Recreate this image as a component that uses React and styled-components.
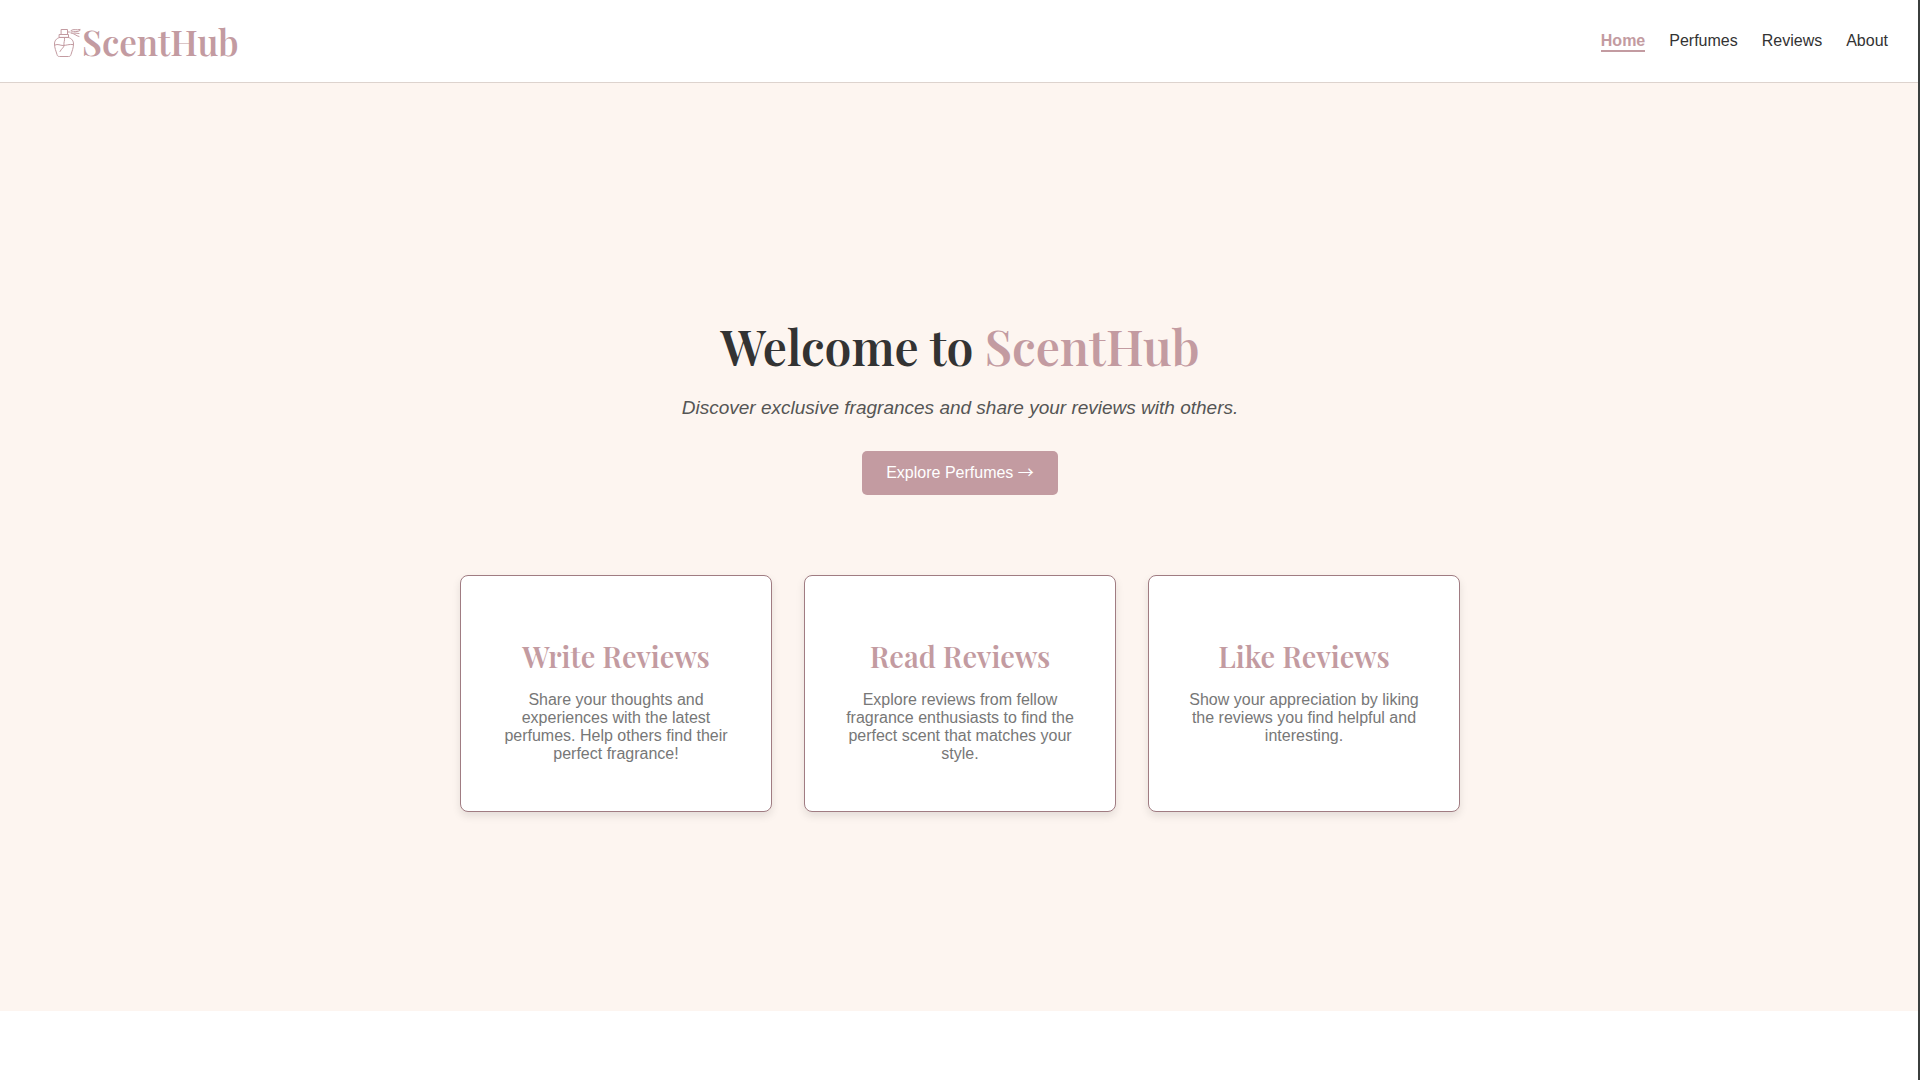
import React from "react";
import styled, { createGlobalStyle } from "styled-components";

const rose = "#c39ba1";
const sans = '"Liberation Sans", Arial, sans-serif';
const serif = '"Playfair Display", "Liberation Serif", serif';

const GlobalStyle = createGlobalStyle`
  * { box-sizing: border-box; }
  body { margin: 0; background: #fff; font-family: ${sans}; font-size: 16px; line-height: 18px; }
`;

const Header = styled.header`
  display: flex;
  justify-content: space-between;
  align-items: center;
  padding: 17px 32px 15px 52px;
  border-bottom: 1px solid #ddd3ce;
`;

const Brand = styled.a`
  display: flex;
  align-items: center;
  color: ${rose};
  font: 600 35px/50px ${serif};
  text-decoration: none;
`;

const BrandIcon = styled.svg`
  width: 30px;
  height: 32px;
`;

const Nav = styled.nav`
  display: flex;
  gap: 24px;
`;

const NavLink = styled.a`
  border-bottom: 2px solid ${(p) => (p.$active ? rose : "transparent")};
  color: ${(p) => (p.$active ? rose : "#333")};
  font-weight: ${(p) => (p.$active ? "bold" : "normal")};
  text-decoration: none;
`;

const Hero = styled.main`
  display: flex;
  flex-direction: column;
  align-items: center;
  justify-content: center;
  min-height: calc(100vh - 152px);
  padding: 32px;
  background: #fdf5f0;
  text-align: center;
`;

const Title = styled.h1`
  margin: 32px 0 16px;
  color: #333;
  font: 600 48px/64px ${serif};
`;

const Accent = styled.span`
  color: ${rose};
`;

const Subtitle = styled.p`
  margin: 0 0 29px;
  color: #555;
  font-size: 19px;
  font-style: italic;
  line-height: 28px;
`;

const Explore = styled.button`
  padding: 13px 24px;
  border: 0;
  border-radius: 5px;
  background: ${rose};
  color: #fff;
  font: 16px/18px ${sans};
  cursor: pointer;
`;

const Arrow = styled.span`
  font-family: "Noto Sans CJK JP", sans-serif;
  line-height: 0;
`;

const Cards = styled.section`
  display: grid;
  grid-template-columns: repeat(3, 1fr);
  gap: 32px;
  width: 100%;
  max-width: 1000px;
  margin-top: 80px;
`;

const Card = styled.article`
  padding: 60px 40px 48px;
  border: 1px solid #a07c82;
  border-radius: 8px;
  background: #fff;
  box-shadow: 0 4px 8px rgba(0, 0, 0, 0.1);
`;

const CardTitle = styled.h2`
  margin: 0 0 15px;
  color: ${rose};
  font: 600 29px/40px ${serif};
`;

const CardText = styled.p`
  margin: 0;
  color: #777;
`;

const WindowEdge = styled.div`
  position: fixed;
  inset: 0 0 0 auto;
  width: 2px;
  background: #3b3f3e;
`;

const links = ["Home", "Perfumes", "Reviews", "About"];

const features = [
  {
    title: "Write Reviews",
    text: "Share your thoughts and experiences with the latest perfumes. Help others find their perfect fragrance!",
  },
  {
    title: "Read Reviews",
    text: "Explore reviews from fellow fragrance enthusiasts to find the perfect scent that matches your style.",
  },
  {
    title: "Like Reviews",
    text: "Show your appreciation by liking the reviews you find helpful and interesting.",
  },
];

function PerfumeIcon() {
  return (
    <BrandIcon viewBox="0 0 30 32" fill="none" stroke={rose} strokeWidth="1" strokeLinecap="round" strokeLinejoin="round" aria-hidden="true">
      <path d="M9.500 3.500h6v5h-6zM15.500 6h2M7.500 8.500h9v3h-9z" />
      <path d="M7.500 11.500c-3.500 1-5 3.500-5 6.500 0 4 1.500 7 2.500 10.500.4 1.500 1 2 2.500 2h9c1.500 0 2.100-.5 2.500-2 1-3.500 2.500-6.500 2.500-10.500 0-3-1.500-5.500-5-6.500z" />
      <path d="M3 19c3-1.500 5 .5 8 .5s6-1.500 10-1M12.500 12c.5 3-1 4-.5 7.500 0 2-2.500 3-4 6" />
      <path d="M19 4.500c3-2 5 0 9-1M19 6c4-1 6 .5 9-1.500M19 7c3 0 5 3 8 3.500M22 7l5 .5" />
    </BrandIcon>
  );
}

export default function App() {
  return (
    <>
      <GlobalStyle />
      <Header>
        <Brand href="#home">
          <PerfumeIcon />
          ScentHub
        </Brand>
        <Nav>
          {links.map((name, i) => (
            <NavLink key={name} href={`#${name.toLowerCase()}`} $active={i === 0}>
              {name}
            </NavLink>
          ))}
        </Nav>
      </Header>
      <Hero>
        <Title>
          Welcome to <Accent>ScentHub</Accent>
        </Title>
        <Subtitle>Discover exclusive fragrances and share your reviews with others.</Subtitle>
        <Explore type="button">
          Explore Perfumes <Arrow>→</Arrow>
        </Explore>
        <Cards>
          {features.map((f) => (
            <Card key={f.title}>
              <CardTitle>{f.title}</CardTitle>
              <CardText>{f.text}</CardText>
            </Card>
          ))}
        </Cards>
      </Hero>
      <WindowEdge />
    </>
  );
}
